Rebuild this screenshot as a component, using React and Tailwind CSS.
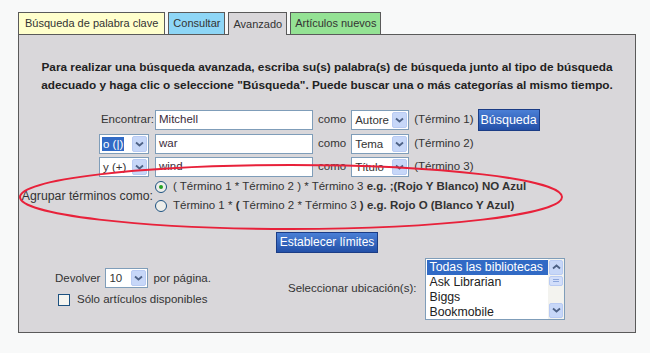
import React from 'react';

const font = "font-['Liberation_Sans',Arial,sans-serif]";

function Arrow({ up = false }) {
  return (
    <svg width="9" height="6" viewBox="0 0 9 6" className={up ? 'rotate-180' : ''}>
      <path d="M1 1.5 L4.5 4.5 L8 1.5" fill="none" stroke="#4d6185" strokeWidth="1.8" />
    </svg>
  );
}

function FakeSelect({ value, width, selected = false }) {
  return (
    <div
      className={`flex h-[20px] items-stretch border border-[#7f9db9] bg-white ${width}`}
    >
      <div className="flex flex-1 items-center pl-[2px] overflow-hidden">
        <span
          className={
            selected
              ? 'bg-[#316ac5] px-[1px] leading-[14px] text-white'
              : 'px-[1px] leading-[14px] text-[#333]'
          }
        >
          {value}
        </span>
      </div>
      <div className="m-[1px] flex w-[15px] items-center justify-center rounded-[2px] border border-[#b9cbf3] bg-[#c7d7f8]">
        <Arrow />
      </div>
    </div>
  );
}

function Input({ value }) {
  return (
    <div className="flex h-[20px] w-[158px] items-center border border-[#7f9db9] bg-white pl-[3px] text-[#3b2b3b]">
      {value}
    </div>
  );
}

function Radio({ checked }) {
  return (
    <span className="flex h-[12px] w-[12px] items-center justify-center rounded-full border border-[#1c5180] bg-[#eeeeea]">
      {checked && <span className="h-[4px] w-[4px] rounded-full bg-[#21a121]" />}
    </span>
  );
}

function BlueButton({ children, className = '' }) {
  return (
    <div
      className={`flex items-center justify-center border border-[#1b3c85] bg-gradient-to-b from-[#4a7fd6] to-[#2350a8] text-white ${className}`}
    >
      {children}
    </div>
  );
}

export default function App() {
  const tabs = [
    { label: 'Búsqueda de palabra clave', cls: 'bg-[#ffffcc] px-[6px]' },
    { label: 'Consultar', cls: 'bg-[#8ed6f6] px-[4px]' },
    { label: 'Avanzado', cls: 'bg-[#d9d7da] h-[23px] -mb-px z-10 px-[4px]', active: true },
    { label: 'Artículos nuevos', cls: 'bg-[#94e294] px-[4px]' },
  ];

  const rows = [
    { left: <span className="mr-[1px]">Encontrar:</span>, value: 'Mitchell', type: 'Autore', term: '(Término 1)', btn: true },
    { left: <div className="mr-[6px]"><FakeSelect value="o (|)" width="w-[50px]" selected /></div>, value: 'war', type: 'Tema', term: '(Término 2)' },
    { left: <div className="mr-[6px]"><FakeSelect value="y (+)" width="w-[50px]" /></div>, value: 'wind', type: 'Título', term: '(Término 3)' },
  ];

  const locations = ['Todas las bibliotecas', 'Ask Librarian', 'Biggs', 'Bookmobile'];

  return (
    <div className={`h-[353px] w-[650px] bg-[#f8f9f9] pl-[18px] pt-[12px] text-[11.5px] text-[#333] ${font}`}>
      {/* Tabs */}
      <div className="flex items-end gap-[3px]">
        {tabs.map((t) => (
          <div
            key={t.label}
            className={`relative flex h-[22px] items-center border border-b-0 border-[#5a5a5a] text-[11px] ${t.cls}`}
          >
            {t.label}
          </div>
        ))}
      </div>

      {/* Panel */}
      <div className="relative h-[299px] w-[618px] border border-[#5a5a5a] bg-[#d9d7da]">
        <p className="pt-[23px] text-center text-[11.8px] font-bold leading-[18px] text-[#222]">
          Para realizar una búsqueda avanzada, escriba su(s) palabra(s) de búsqueda junto al tipo de búsqueda
          <br />
          adecuado y haga clic o seleccione "Búsqueda". Puede buscar una o más categorías al mismo tiempo.
        </p>

        <div className="mt-[16px] flex flex-col gap-[3.5px]">
          {rows.map((r) => (
            <div key={r.value} className="flex h-[20px] items-center">
              <div className="flex w-[136px] justify-end">{r.left}</div>
              <Input value={r.value} />
              <span className="ml-[5px] mr-[5px]">como</span>
              <FakeSelect value={r.type} width="w-[58px]" />
              <span className="ml-[5px]">{r.term}</span>
              {r.btn && <BlueButton className="ml-[4px] h-[22px] w-[62px] text-[12.5px]">Búsqueda</BlueButton>}
            </div>
          ))}
        </div>

        <div className="mt-[1px] flex items-center">
          <div className="w-[136px] pr-[2px] text-right text-[12.3px]">Agrupar términos como:</div>
          <div className="flex flex-col gap-[2px]">
            <div className="flex items-center gap-[6px]">
              <Radio checked />
              <span>
                ( Término 1 * Término 2 ) * Término 3 <b>e.g. ;(Rojo Y Blanco) NO Azul</b>
              </span>
            </div>
            <div className="flex items-center gap-[6px]">
              <Radio />
              <span>
                Término 1 * <b>(</b> Término 2 * Término 3 <b>) e.g. Rojo O (Blanco Y Azul)</b>
              </span>
            </div>
          </div>
        </div>

        <div className="mt-[17px] flex justify-center">
          <BlueButton className="h-[21px] w-[102px] text-[12px]">Establecer límites</BlueButton>
        </div>

        <div className="mt-[5px] flex items-center">
          <div className="ml-[36px] flex w-[233px] flex-col gap-[3px]">
            <div className="flex items-center">
              <span>Devolver</span>
              <div className="ml-[5px] mr-[5px]">
                <FakeSelect value="10" width="w-[43px]" />
              </div>
              <span>por página.</span>
            </div>
            <div className="flex items-center">
              <span className="ml-[3px] mr-[7px] h-[12px] w-[12px] border border-[#1c5180] bg-[#f4f4f0]" />
              <span>Sólo artículos disponibles</span>
            </div>
          </div>
          <span className="mr-[9px]">Seleccionar ubicación(s):</span>
          <div className="flex h-[62px] w-[140px] border border-[#7f9db9] bg-white">
            <div className="flex-1 overflow-hidden pt-[1px] pl-[1px]">
              {locations.map((l, i) => (
                <div
                  key={l}
                  className={`h-[15px] whitespace-nowrap pl-[2px] text-[12.3px] leading-[15px] ${i === 0 ? 'bg-[#316ac5] text-white' : 'text-[#222]'}`}
                >
                  {l}
                </div>
              ))}
            </div>
            <div className="flex w-[16px] flex-col bg-[#f3f3ef] p-[1px]">
              <div className="flex h-[15px] items-center justify-center rounded-[2px] border border-[#b9cbf3] bg-[#c7d7f8]">
                <Arrow up />
              </div>
              <div className="mt-[1px] flex h-[10px] flex-col items-center justify-center gap-[1px] rounded-[2px] border border-[#b9cbf3] bg-[#d2defa]">
                <span className="h-px w-[6px] bg-[#8da7dc]" />
                <span className="h-px w-[6px] bg-[#8da7dc]" />
              </div>
              <div className="flex-1" />
              <div className="flex h-[15px] items-center justify-center rounded-[2px] border border-[#b9cbf3] bg-[#c7d7f8]">
                <Arrow />
              </div>
            </div>
          </div>
        </div>

        {/* Red ellipse annotation */}
        <svg className="pointer-events-none absolute left-0 top-[128px]" width="560" height="70" viewBox="0 0 560 70">
          <ellipse cx="272" cy="34" rx="271" ry="32" fill="none" stroke="#e8213a" strokeWidth="2" />
        </svg>
      </div>
    </div>
  );
}
